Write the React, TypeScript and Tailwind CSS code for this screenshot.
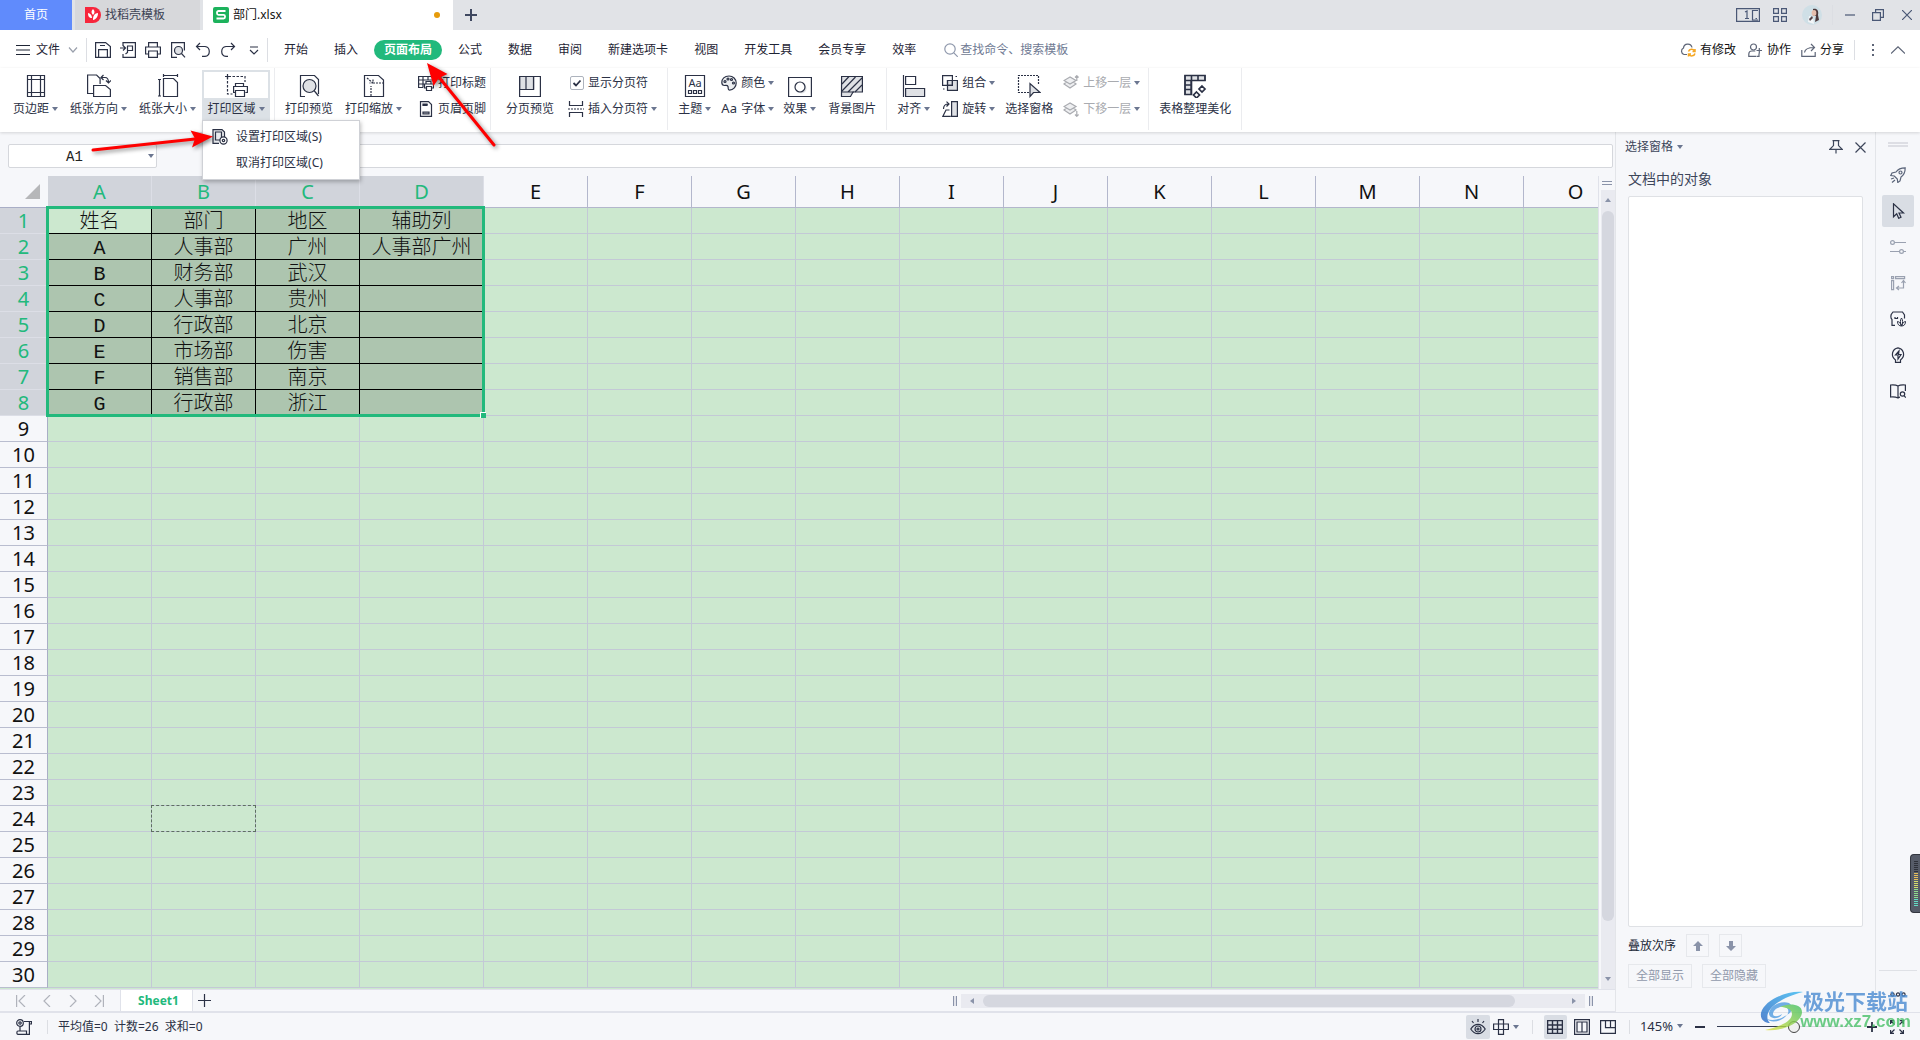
import React from 'react';

type Kids = { children?: React.ReactNode };

interface IconProps extends Kids {
  w?: number;
  h?: number;
  className?: string;
}

const Icon: React.FC<IconProps> = ({ w = 24, h, className = '', children }) => (
  <svg
    width={w}
    height={h ?? w}
    viewBox={`0 0 ${w} ${h ?? w}`}
    fill="none"
    stroke="currentColor"
    strokeWidth="1.2"
    className={`shrink-0 ${className}`}
    aria-hidden="true"
  >
    {children}
  </svg>
);

const Caret = ({ className = 'text-[#6b7690]' }: { className?: string }) => (
  <svg width="6" height="4" viewBox="0 0 6 4" fill="currentColor" className={`shrink-0 ${className}`} aria-hidden="true">
    <path d="M0 0h6L3 4z" />
  </svg>
);

const Sep = ({ className = 'h-5' }: { className?: string }) => <span className={`w-px shrink-0 bg-[#dcdee3] ${className}`} />;

/* ---------- title bar ---------- */

const TitleBar = () => (
  <header className="flex h-[30px] shrink-0 items-stretch bg-[#e1e3e7]">
    <button className="w-18 bg-[#608bfc] text-white">首页</button>
    <button className="ml-[3px] flex w-[125px] items-center gap-1 bg-[#d7d8db] pl-[10px] text-[#3c4254]">
      <svg width="16" height="16" viewBox="0 0 16 16" aria-hidden="true">
        <path d="M0 0h8a8 8 0 0 1 0 16H0z" fill="#f7263c" />
        <path d="M8 2c2 2 2 4 0 6-2-2-2-4 0-6zM3 6c2 .5 4 2 4 5-3 0-4-2-4-5zM13 6c-3 .5-5 2-5 7 3-.5 5-3 5-7z" fill="#fff" />
      </svg>
      找稻壳模板
    </button>
    <div className="ml-[3px] flex w-[250px] items-center gap-1 bg-white pl-[10px] text-[#111]">
      <svg width="16" height="16" viewBox="0 0 16 16" aria-hidden="true">
        <rect width="16" height="16" rx="2" fill="#1cb25c" />
        <path d="M12.5 4H5.5a1.5 1.5 0 0 0-1.5 1.5v.8c0 .9.6 1.5 1.5 1.5h5c.9 0 1.5.6 1.5 1.4v.8c0 .9-.6 1.5-1.5 1.5H3.5" fill="none" stroke="#fff" strokeWidth="1.8" />
      </svg>
      部门.xlsx
      <span className="mr-[13px] ml-auto size-1.5 rounded-full bg-[#e69b0b]" />
    </div>
    <button aria-label="新建标签" className="ml-[11px] text-[#3f4860]">
      <Icon w={14}>
        <path d="M7 1v12M1 7h12" strokeWidth="2" />
      </Icon>
    </button>
    <div className="ml-auto flex items-center text-[#4a5876]">
      <Icon w={24} h={14}>
        <path d="M.6.6h22.800v12.800H.6zM22 2.500h-5.500v9.500H22M19.500 10.500h1.500" />
        <path d="M9 4l2-1v7.500M9 10.500h4" />
      </Icon>
      <Icon w={14} className="ml-[13px]">
        <path d="M.6.6h4.8v4.800H.6zM8.600.6h4.800v4.800H8.600zM.6 8.600h4.800v4.800H.6zM8.600 8.600h4.800v4.800H8.600z" />
      </Icon>
      <svg width="20" height="20" viewBox="0 0 20 20" className="ml-[15px]" aria-hidden="true">
        <circle cx="10" cy="10" r="10" fill="#cfdfe6" />
        <path d="M11 4c4-1 6 2 5 6l1 5-4 2 1-6-3 0z" fill="#4b383b" />
        <ellipse cx="12" cy="8" rx="2.400" ry="3" fill="#e6bfae" />
        <path d="M7 11l4 1 1 7-6-2z" fill="#f3f6f8" />
        <path d="M7 14l3-3 1 2-3 3z" fill="#57454a" />
      </svg>
      <Sep className="ml-[10px] h-5 bg-[#c6c9d0]" />
      <button aria-label="最小化" className="ml-3">
        <Icon w={10}><path d="M0 5h10" /></Icon>
      </button>
      <button aria-label="还原" className="ml-[17px]">
        <Icon w={12}><path d="M.6 3.600h7.800v7.800H.6zM3.600 3.600v-3h7.800v7.800h-3" /></Icon>
      </button>
      <button aria-label="关闭" className="mr-2 ml-[18px]">
        <Icon w={10}><path d="M0 0l10 10M10 0L0 10" /></Icon>
      </button>
    </div>
  </header>
);

/* ---------- menu row ---------- */

const MENU_TABS = ['开始', '插入', '页面布局', '公式', '数据', '审阅', '新建选项卡', '视图', '开发工具', '会员专享', '效率'];

const QuickAccess = () => (
  <div className="flex items-center gap-[9px] text-[#2b3145]">
    <button aria-label="保存">
      <Icon w={16}><path d="M.6.6h10l4.800 4v10.800H.6zM3.600 15V7.600h8.800V15M5 3.500h5" /></Icon>
    </button>
    <button aria-label="输出为PDF">
      <Icon w={16}><path d="M3 4V.6h12.400v14.800H3V12M0 6h5M3 3.500L5.500 6 3 8.500M7 4h5.500v4.500H8M7.500 4v6.500l-2 1.500" /></Icon>
    </button>
    <button aria-label="打印">
      <Icon w={16}><path d="M3.600 5V.6h8.800V5M3.600 12H.6V5h14.800v7h-3M3.600 9h8.800v6.400H3.600z" /></Icon>
    </button>
    <button aria-label="打印预览">
      <Icon w={16}>
        <path d="M7 15.400H1.600V.6h12.800v8" />
        <circle cx="8.500" cy="8.500" r="4" fill="#dfe1e5" />
        <path d="M11.500 11.500l3.500 3.900" />
      </Icon>
    </button>
    <button aria-label="撤销">
      <Icon w={16}><path d="M5 1L1.500 4.500 5 8M1.500 4.500H10a5 5 0 0 1 0 9.900H7" /></Icon>
    </button>
    <button aria-label="恢复">
      <Icon w={16}><path d="M11 1l3.500 3.500L11 8M14.500 4.500H6a5 5 0 0 0 0 9.900h2" /></Icon>
    </button>
    <button aria-label="更多" className="ml-1">
      <Icon w={10}><path d="M1 2h8M1 5l4 4 4-4" /></Icon>
    </button>
  </div>
);

const MenuRow = () => (
  <nav className="flex h-[38px] shrink-0 items-center bg-white pt-0.5 text-[#1e2434]">
    <button className="ml-4 flex items-center gap-[6px]">
      <Icon w={14} h={10}><path d="M0 .5h14M0 5h14M0 9.500h14" /></Icon>
      文件
      <Icon w={10} h={6} className="ml-0.5 text-[#9aa0ac]"><path d="M1 .5l4 4.500L9 .5" /></Icon>
    </button>
    <Sep className="mx-2 h-6" />
    <QuickAccess />
    <Sep className="mr-[3px] ml-2 h-6" />
    <div className="flex items-center">
      {MENU_TABS.map((t) => (
        <button
          key={t}
          className={
            t === '页面布局'
              ? 'mx-[3px] h-5 rounded-full bg-[#22b97c] px-2.5 font-bold text-white'
              : 'mx-[3px] h-5 px-2.5'
          }
        >
          {t}
        </button>
      ))}
    </div>
    <label className="ml-[15px] flex items-center gap-0.5 text-[#8f98ac]">
      <Icon w={14}><circle cx="6" cy="6" r="5.200" /><path d="M9.800 9.800l4 4" /></Icon>
      <input className="w-32 placeholder:text-[#6f7a93]" placeholder="查找命令、搜索模板" aria-label="查找命令、搜索模板" />
    </label>
    <div className="ml-auto flex items-center text-[#5d6577]">
      <button className="flex items-center gap-1">
        <Icon w={16}>
          <path d="M7 12.500H4A3.500 3.500 0 0 1 3.500 6a4.300 4.300 0 0 1 8.500-.5" />
          <path d="M8.500 9.500a3.300 3.300 0 0 1 6-.5M15 7v2.500h-2.500M15 11.500a3.300 3.300 0 0 1-6 .8M8.500 14.500V12H11" stroke="#f5a623" strokeWidth="1.500" />
        </Icon>
        <span className="text-[#111]">有修改</span>
      </button>
      <button className="ml-3 flex items-center gap-1">
        <Icon w={15}>
          <circle cx="5.500" cy="4" r="3" />
          <path d="M8.500 13.400H.8v-2.400c0-2 1.500-3 3-3h3.500M9 13.400h2v-3M8.500 7.500H14M11.300 5v5.500" />
        </Icon>
        <span className="text-[#111]">协作</span>
      </button>
      <button className="ml-2.5 flex items-center gap-1">
        <Icon w={15}><path d="M.8 7v6.400h13.400V9M3.500 9.500C4 6 7 4.500 13 4.500M10 1l3.500 3.500L10 8" /></Icon>
        <span className="text-[#111]">分享</span>
      </button>
      <Sep className="ml-2.5 h-5" />
      <button aria-label="更多选项" className="ml-4">
        <Icon w={4} h={14}><path d="M1 2h2M1 7h2M1 12h2" strokeWidth="2" /></Icon>
      </button>
      <button aria-label="折叠功能区" className="mr-[15px] ml-4">
        <Icon w={14} h={8}><path d="M0 7.500L7 .8l7 6.700" /></Icon>
      </button>
    </div>
  </nav>
);

/* ---------- ribbon ---------- */

const Group = ({ className = 'pr-1 pl-1', children }: Kids & { className?: string }) => (
  <div className={`flex h-[62px] items-start border-r border-[#ebecef] pt-0.5 ${className}`}>{children}</div>
);

interface BigProps extends Kids {
  label: string;
  caret?: boolean;
}

const Big: React.FC<BigProps> = ({ label, caret, children }) => (
  <button className="flex flex-col items-center px-1.5 pt-1 whitespace-nowrap">
    {children}
    <span className="flex h-[22px] items-center gap-[3px]">
      {label}
      {caret && <Caret />}
    </span>
  </button>
);

const Small: React.FC<BigProps & { muted?: boolean }> = ({ label, caret, muted, children }) => (
  <button disabled={muted} className={`flex h-[26px] items-center gap-1 whitespace-nowrap ${muted ? 'text-[#a9abb0]' : ''}`}>
    {children}
    <span className="flex items-center gap-[3px]">
      {label}
      {caret && <Caret />}
    </span>
  </button>
);

const LayersPath = () => (
  <>
    <path d="M7 2L1 5.500 7 9l6-3.500zM3.500 7L1 9l6 4 6-4-2.500-2" fill="#eeeff1" />
  </>
);

const Ribbon = () => (
  <div className="relative z-10 flex h-16 shrink-0 items-start bg-white text-[#2b3145] shadow-[0_1px_3px_rgba(0,0,0,0.14)]">
    <Group className="pr-1 pl-[7px]">
      <Big label="页边距" caret>
        <Icon>
          <path d="M3.500 1.500h17v21h-17zM7.500 1.500v21M16.500 1.500v21M3.500 5.500h17M3.500 18.500h17" />
        </Icon>
      </Big>
      <Big label="纸张方向" caret>
        <Icon>
          <path d="M6.500 19.500H.6V1h9l3.500 3.500V10" />
          <path d="M6.600 22.500V11.500h12l4.800 4v7z" />
          <path d="M14 3.500h4c2.500 0 3.500 1.500 3.500 5M16.500 1L14 3.500 16.500 6M19 6.500L21.500 9 24 6.500" />
        </Icon>
      </Big>
      <Big label="纸张大小" caret>
        <Icon>
          <path d="M7.500 4.500h10l4 4v14h-14zM7 1.500h15M7.500 0v3M21.500 0v3M3.500 5v17M2 5.500h3M2 22h3" />
        </Icon>
      </Big>
      <div className="relative">
        <button className="flex flex-col items-center bg-[#dce1e6] px-0.5 whitespace-nowrap" aria-expanded="true">
          <span className="mt-0.5 flex w-16 justify-center bg-white pt-0.5">
            <Icon>
              <path d="M4.500 2.500H21V8M3.500 3v17h5" strokeDasharray="2.500 1.500" />
              <path d="M1 2.500h5M3.500 0v5" />
              <path d="M11.500 12.500v-3h8v3M11.500 18.500H9.600v-6h13.800v6h-2M11.500 16.500h9v6h-9z" fill="#fff" />
            </Icon>
          </span>
          <span className="flex h-[22px] items-center gap-[3px]">
            打印区域
            <Caret />
          </span>
        </button>
        <PrintAreaMenu />
      </div>
    </Group>
    <Group>
      <Big label="打印预览">
        <Icon>
          <path d="M8 22.500H3.500v-21h14l4 4V20" />
          <circle cx="12.500" cy="12" r="6.500" fill="#dfe1e5" />
          <path d="M17 16.500l4.500 5.500" />
        </Icon>
      </Big>
      <Big label="打印缩放" caret>
        <Icon>
          <path d="M2.500 1.500h14l5 4.500v16.500h-19z" />
          <path d="M5 4l6 5M11 5.500V9H7.500M9 22V12M11 9h10" strokeDasharray="2 1" />
        </Icon>
      </Big>
      <div className="flex flex-col pl-2.5">
        <Small label="打印标题">
          <Icon w={16}>
            <path d="M5 12.500H.6V1.500h14.800V6M.6 5h14M5 1.500v11M.6 9H6M10 1.500v4" />
            <path d="M8 9V6.500h5V9M8 13H6.500V9h9v4H14M8.500 11.500h5v4h-5z" />
          </Icon>
        </Small>
        <Small label="页眉页脚">
          <Icon w={16}><path d="M2.500.6h8l3 3v11.800h-11zM5 3.500h4.500M5 12h6" /><path d="M5 11h6v2H5zM5 3h4v1.500H5z" /></Icon>
        </Small>
      </div>
    </Group>
    <Group className="pr-2.5 pl-[9px]">
      <Big label="分页预览">
        <Icon>
          <path d="M1.600 2.500h14v13h-14z" fill="#dfe1e5" />
          <path d="M1.600 2.500h20.800v20H1.600zM8 2.500v13M15.500 2.500v13" />
        </Icon>
      </Big>
      <div className="flex flex-col pl-2">
        <label className="flex h-[26px] items-center gap-1 pl-0.5 whitespace-nowrap">
          <span className="relative flex size-[14px]">
            <input type="checkbox" defaultChecked className="size-[14px] appearance-none rounded-[2px] border border-[#adb3bd] bg-white" />
            <Icon w={14} className="pointer-events-none absolute inset-0"><path d="M3.500 7l2.500 2.500 4.500-5" strokeWidth="1.800" /></Icon>
          </span>
          显示分页符
        </label>
        <Small label="插入分页符" caret>
          <Icon w={16}>
            <path d="M1.500 0v4.500h13V0M1.500 16v-4.500h13V16" />
            <path d="M0 8h16" strokeDasharray="2 1" />
          </Icon>
        </Small>
      </div>
    </Group>
    <Group>
      <Big label="主题" caret>
        <Icon>
          <path d="M2.500 1.500h19v21h-19z" />
          <text x="12" y="13" fontSize="11" textAnchor="middle" stroke="none" fill="currentColor" fontFamily="Noto Sans">Aa</text>
          <path d="M5.500 16.500h3v3h-3zM10.500 16.500h3v3h-3zM15.500 16.500h3v3h-3z" />
        </Icon>
      </Big>
      <div className="flex flex-col pl-1">
        <Small label="颜色" caret>
          <Icon w={16}>
            <path d="M8 1C3.500 1 .8 4 .8 7.500c0 2 1.200 3 2.700 3 2 0 3-.5 3.500 1 .5 2-.5 3.700 1.500 3.700 4 0 6.700-3.700 6.700-7.200C15.200 4 12 1 8 1z" fill="#eceef0" />
            <circle cx="4" cy="6.500" r="1" /><circle cx="7" cy="4" r="1" /><circle cx="10.500" cy="4.500" r="1" /><circle cx="12.500" cy="8" r="1" />
          </Icon>
        </Small>
        <Small label="字体" caret>
          <span className="w-4 text-[13px]">Aa</span>
        </Small>
      </div>
      <div className="pl-[3px]">
        <Big label="效果" caret>
          <Icon>
            <path d="M.6 3.500h22.800v19H.6z" />
            <circle cx="13.500" cy="14.500" r="5" fill="#dfe1e5" stroke="none" />
            <circle cx="12" cy="13" r="5" fill="#fff" />
          </Icon>
        </Big>
      </div>
      <Big label="背景图片">
        <Icon>
          <path d="M1.600 2.500h20.800v15.500H13l-2.500 4.500h-9z" fill="#dfe1e5" />
          <path d="M2 10l7-7.500M2 17L15.500 3M8 18L22 4M15 18l7-7M2 18h12" />
        </Icon>
      </Big>
    </Group>
    <Group className="pr-2 pl-1">
      <Big label="对齐" caret>
        <Icon>
          <path d="M1.500 1v22M3.600 2.500h10v8h-10z" />
          <path d="M3.600 14.500h19v8h-19z" fill="#dfe1e5" />
        </Icon>
      </Big>
      <div className="flex flex-col pr-1 pl-1.5">
        <Small label="组合" caret>
          <Icon w={16}>
            <path d="M5.500 5.500h9.900v9.900H5.500z" fill="#dfe1e5" />
            <path d="M.6.6h9.800v9.800H.6z" />
            <path d="M5.500 5.500h4.900v4.900H5.500zM13.500 1.500h1.500M1 14h1.500" />
          </Icon>
        </Small>
        <Small label="旋转" caret>
          <Icon w={16}>
            <path d="M9.600.6h5.800v14.800H9.600z" fill="#dfe1e5" />
            <path d="M7.500 9H4L.8 15.400h8M1.500 8c0-3 1.500-5 5-5M4.500.6L7 3 4.500 5.500" />
          </Icon>
        </Small>
      </div>
      <Big label="选择窗格">
        <Icon>
          <path d="M12 18.500H1.500v-17h20V11" strokeDasharray="2 1" />
          <path d="M13 9.500v13l3.500-4h6.500z" fill="#dfe1e5" />
        </Icon>
      </Big>
      <div className="flex flex-col pl-1">
        <Small label="上移一层" caret muted>
          <Icon w={16}><LayersPath /><path d="M13.800 6V1M12 2.500L13.800.7l1.800 1.800" /></Icon>
        </Small>
        <Small label="下移一层" caret muted>
          <Icon w={16}><LayersPath /><path d="M13.800 10v5M12 13.500l1.800 1.800 1.800-1.800" /></Icon>
        </Small>
      </div>
    </Group>
    <Group>
      <Big label="表格整理美化">
        <Icon>
          <path d="M2 1.500h20v5H8v14H2z" fill="#dfe1e5" />
          <path d="M2 1.500h20v5H2zM2 6.500v14h6.500v-19M2 11h6M2 15.500h6M15 1.500v5" strokeWidth="1.600" />
          <path d="M19 12l3 3-3 3-3-3zM13.500 18l3 3-3 3-3-3z" strokeWidth="1.700" />
        </Icon>
      </Big>
    </Group>
  </div>
);

const PrintAreaMenu = () => (
  <ul className="absolute top-[50px] left-0 z-20 w-[158px] border border-[#cfd1d6] bg-white py-[3px] text-[#2b3145] shadow-[1px_2px_4px_rgba(0,0,0,0.25)]">
    <li>
      <button className="flex h-[26px] w-full items-center gap-2 pl-[9px]">
        <Icon w={16}>
          <path d="M7 14.400H1V.6h9l2.500 2.500V8M3.500 3h6v8h-6z" fill="#e9ebee" />
          <circle cx="11.500" cy="11.500" r="3.600" fill="#fff" />
          <circle cx="11.500" cy="11.500" r="1.200" />
        </Icon>
        设置打印区域(S)
      </button>
    </li>
    <li>
      <button className="flex h-[26px] w-full items-center pl-[33px]">取消打印区域(C)</button>
    </li>
  </ul>
);

/* ---------- worksheet ---------- */

const COLS = 'ABCDEFGHIJKLMNO'.split('');
const ROWS = Array.from({ length: 30 }, (_, i) => i + 1);
const DATA = [
  ['姓名', '部门', '地区', '辅助列'],
  ['A', '人事部', '广州', '人事部广州'],
  ['B', '财务部', '武汉', ''],
  ['C', '人事部', '贵州', ''],
  ['D', '行政部', '北京', ''],
  ['E', '市场部', '伤害', ''],
  ['F', '销售部', '南京', ''],
  ['G', '行政部', '浙江', ''],
];

const cellClass = (r: number, c: number) => {
  if (r === 0 && c === 0) return 'border-black bg-[#cce8cf]';
  if (r < 8 && c < 4) return 'border-black bg-[#adc5af]';
  return 'border-[#c3c9d6]';
};

const Sheet = () => (
  <div className="relative min-h-0 flex-1 overflow-hidden bg-[#cce8cf]">
    <table className="w-max table-fixed border-separate border-spacing-0 text-center">
      <colgroup>
        <col className="w-12" />
        {COLS.map((c) => (
          <col key={c} className={c === 'D' ? 'w-[124px]' : 'w-[104px]'} />
        ))}
      </colgroup>
      <thead>
        <tr className="h-8">
          <th className="h-8 border-b border-[#a9aec6] bg-[#f6f7fa] p-0 align-bottom">
            <svg width="15" height="15" viewBox="0 0 15 15" className="mb-2 ml-[25px]" aria-hidden="true">
              <path d="M15 0v15H0z" fill="#b6b7b9" />
            </svg>
          </th>
          {COLS.map((c, i) => (
            <th
              key={c}
              scope="col"
              className={`h-8 border-r border-b p-0 text-xl font-normal leading-[30px] ${
                i < 4 ? 'border-r-[#dcdee6] border-b-[#a9aec6] bg-[#d1d4db] text-[#22b97c]' : 'border-[#b3b7cc] bg-[#f6f7fa] text-[#111]'
              }`}
            >
              {c}
            </th>
          ))}
        </tr>
      </thead>
      <tbody>
        {ROWS.map((n, r) => (
          <tr key={n}>
            <th
              scope="row"
              className={`h-[26px] border-r border-b border-r-[#a9aec6] p-0 text-xl font-normal leading-[25px] ${
                r < 8 ? 'border-b-[#dcdee6] bg-[#d1d4db] text-[#22b97c]' : 'border-b-[#b9bdcf] bg-[#f6f7fa] text-[#111]'
              }`}
            >
              {n}
            </th>
            {COLS.map((c, i) => (
              <td
                key={c}
                className={`h-[26px] border-r border-b p-0 pt-1 font-['Liberation_Mono','Noto_Sans_CJK_SC',monospace] text-xl leading-[21px] font-light whitespace-nowrap text-[#111] ${cellClass(r, i)}`}
              >
                {DATA[r]?.[i]}
              </td>
            ))}
          </tr>
        ))}
      </tbody>
    </table>
    {/* selected range A1:D8 with its fill handle */}
    <div className="pointer-events-none absolute top-[30px] left-[46px] h-[211px] w-[439px] border-3 border-[#22b97c]">
      <span className="absolute -right-1 -bottom-1 size-[6px] border-t border-l border-white bg-[#22b97c]" />
    </div>
    {/* copied cell B24 */}
    <div className="pointer-events-none absolute top-[629px] left-[151px] h-[27px] w-[105px] border border-dashed border-[#5d6f62]" />
  </div>
);

const FormulaBar = () => (
  <div className="flex h-11 shrink-0 items-center gap-12 bg-[#f6f7fa] pt-2 pr-0.5 pb-1 pl-2">
    <div className="flex h-6 w-[149px] items-center rounded-[2px] border border-[#d5d7dc] bg-white pr-0.5">
      <input defaultValue="A1" aria-label="名称框" className="h-5 w-full min-w-0 pt-0.5 pr-2 text-center font-['Liberation_Mono',monospace] text-sm text-[#222]" />
      <Caret />
    </div>
    <input aria-label="编辑栏" className="h-6 min-w-0 flex-1 rounded-[2px] border border-[#d5d7dc] bg-white" />
  </div>
);

const VScroll = () => (
  <div className="flex w-[17px] shrink-0 flex-col items-center border-l border-[#e0e2ea] bg-[#f6f7fa]">
    <div className="flex h-[14px] w-full items-center justify-center text-[#8a93a9]">
      <Icon w={10} h={4}><path d="M0 .5h10M0 3.500h10" /></Icon>
    </div>
    <div className="ml-[2px] flex w-[14px] flex-1 flex-col items-center bg-[#e9eaf0]">
      <Caret className="mt-2 rotate-180 text-[#8a93a9]" />
      <div className="mt-[9px] w-3 flex-1 rounded-full bg-[#d5d7df]" />
      <Caret className="mt-14 mb-2 text-[#8a93a9]" />
    </div>
  </div>
);

const SheetTabs = () => (
  <div className="flex h-[23px] shrink-0 items-center border-y border-[#e0e2ea] bg-[#f6f7fa] text-[#b0b3bb]">
    <div className="ml-4 flex items-center gap-4">
      <button aria-label="第一张"><Icon w={10} h={12}><path d="M.6 0v12M9 0L3 6l6 6" /></Icon></button>
      <button aria-label="上一张"><Icon w={10} h={12}><path d="M8 0L2 6l6 6" /></Icon></button>
      <button aria-label="下一张"><Icon w={10} h={12}><path d="M2 0l6 6-6 6" /></Icon></button>
      <button aria-label="最后一张"><Icon w={10} h={12}><path d="M9.400 0v12M1 0l6 6-6 6" /></Icon></button>
    </div>
    <button className="ml-4 h-full w-[73px] border-x border-[#e0e2ea] bg-white pl-1 font-bold text-[#22b97c]">Sheet1</button>
    <button aria-label="新建工作表" className="ml-[5px] text-[#2b3145]">
      <Icon w={13}><path d="M6.500 0v13M0 6.500h13" /></Icon>
    </button>
    <div className="ml-auto flex w-[41%] items-center text-[#8a93a9]">
      <Icon w={4} h={12}><path d="M.6 1v10M3.400 1v10" /></Icon>
      <div className="mx-1 flex h-[14px] flex-1 items-center bg-[#e9eaf0] px-2">
        <Caret className="rotate-90" />
        <div className="mr-14 ml-2 h-3 flex-1 rounded-full bg-[#d5d7df]" />
        <Caret className="-rotate-90" />
      </div>
      <Icon w={4} h={12} className="mr-[22px]"><path d="M.6 1v10M3.400 1v10" /></Icon>
    </div>
  </div>
);

/* ---------- right side ---------- */

const ObjectPane = () => (
  <aside className="flex w-[261px] shrink-0 flex-col border-x border-[#e3e5e9] bg-[#f6f7fa] pb-6 text-[#3d465a]">
    <div className="flex h-[30px] items-center pl-[9px]">
      <button className="flex items-center gap-1">
        选择窗格
        <Caret />
      </button>
      <button aria-label="固定" className="ml-auto">
        <Icon w={14}><path d="M3.500.6h7M4.500.6v5L.8 9.400h12.400L9.500 5.600v-5M7 9.500V13.500" /></Icon>
      </button>
      <button aria-label="关闭窗格" className="mr-[9px] ml-3">
        <Icon w={11}><path d="M.5.5l10 10M10.500.5l-10 10" /></Icon>
      </button>
    </div>
    <h2 className="flex h-[34px] items-center pl-3 text-sm">文档中的对象</h2>
    <div className="mr-3 ml-3 flex-1 rounded-[2px] border border-[#dfe1e5] bg-white" />
    <div className="mt-[7px] flex items-center gap-2.5 pl-3">
      <span className="text-[#222838]">叠放次序</span>
      <button aria-label="上移" className="flex size-[23px] items-center justify-center border border-[#e6e8ec] text-[#8a93a9]">
        <Icon w={10}><path d="M5 0l5 5H7v5H3V5H0z" fill="currentColor" stroke="none" /></Icon>
      </button>
      <button aria-label="下移" className="flex size-[23px] items-center justify-center border border-[#e6e8ec] text-[#8a93a9]">
        <Icon w={10}><path d="M5 10l5-5H7V0H3v5H0z" fill="currentColor" stroke="none" /></Icon>
      </button>
    </div>
    <div className="mt-[7px] flex gap-2.5 pl-3 text-[#9199ab]">
      <button className="h-6 w-16 border border-[#e6e8ec]">全部显示</button>
      <button className="h-6 w-16 border border-[#e6e8ec]">全部隐藏</button>
    </div>
  </aside>
);

const SideStrip = () => (
  <aside className="flex w-11 shrink-0 flex-col items-center gap-1 bg-[#f6f7fa] pt-[10px] text-[#2b3145]">
    <Icon w={20} h={5} className="mb-2 text-[#c3c6cd]"><path d="M0 1h20M0 4h20" /></Icon>
    <button aria-label="助手" className="flex size-8 items-center justify-center text-[#5a6479]">
      <Icon w={16}>
        <path d="M15.200.8C11 .8 8 2 6 5L2 6 .8 8.500l3.500.5 3 3 .5 3.500L10 14l1-4c3-2 4.200-5 4.200-9.200zM4 11l-3 1M5 13l-3 2.500" />
        <circle cx="10.500" cy="5.500" r="1.500" />
      </Icon>
    </button>
    <button aria-label="选择" className="flex size-8 items-center justify-center rounded-[2px] bg-[#d9dde4]">
      <Icon w={16}><path d="M3.500.8v13l3.200-3 2 4.500 2.300-1-2-4.300h4.500z" /></Icon>
    </button>
    <button aria-label="属性" className="flex size-8 items-center justify-center text-[#9aa1b0]">
      <Icon w={16}><circle cx="2.500" cy="3.500" r="1.900" /><circle cx="11.500" cy="12.500" r="1.900" /><path d="M4.500 3.500H16M0 12.500h9.500M13.500 12.500H16" /></Icon>
    </button>
    <button aria-label="转换" className="flex size-8 items-center justify-center text-[#9aa1b0]">
      <Icon w={16}><path d="M1.600 1.600h2v2h-2zM5.600 1.600h9v2h-9zM1.600 5.600h2v9h-2zM13.500 6v7H7M11.500 8l2-2.500 2 2.500M9 11l-2.500 2L9 15" /></Icon>
    </button>
    <button aria-label="模板" className="flex size-8 items-center justify-center">
      <Icon w={16}>
        <path d="M5 14.400H2V8.500C.5 7.500.6 6 1.200 3.500L3 1h9.500l2 3v3.500M5 6v1.500h2.500V6" />
        <path d="M11.500 7c1.500 2 1.500 5 0 8-1.500-3-1.500-6 0-8zM7.500 10.500c1.500 0 3 1.500 4 4.500-2.500 0-4-1.500-4-4.500zM15.500 10.500c-1.500 0-3 1.500-4 4.500 2.500 0 4-1.500 4-4.500z" strokeWidth="1" />
      </Icon>
    </button>
    <button aria-label="智能" className="flex size-8 items-center justify-center">
      <Icon w={16}><path d="M5.500 15.400v-2.500A6.600 6.600 0 0 1 8 .8a6.600 6.600 0 0 1 2.500 12.100v2.500zM9 4L5.500 8H8v4l3-4.500H8.500z" /></Icon>
    </button>
    <button aria-label="查阅" className="flex size-8 items-center justify-center">
      <Icon w={16}><path d="M8 3v12M8 3C6 1.800 3 1.800.6 2v12c3-.4 5.400 0 7.400 1 .7-.5 1.500-.8 2-.9M8 3c2-1.200 5-1.200 7.400-1v6" /><circle cx="12.500" cy="11" r="2.200" /><path d="M14 12.600l1.800 2" /></Icon>
    </button>
    <span className="mt-auto h-px w-[38px] bg-[#dfe1e6]" />
    <button aria-label="更多工具" className="mt-[17px] mb-[15px]">
      <Icon w={16} h={5}><circle cx="2.500" cy="2.500" r="1.600" /><circle cx="8" cy="2.500" r="1.600" /><circle cx="13.500" cy="2.500" r="1.600" /></Icon>
    </button>
  </aside>
);

/* ---------- status bar ---------- */

const StatusBar = () => (
  <footer className="flex h-[27px] shrink-0 items-center bg-[#f6f7fa] text-[#2b3145]">
    <Icon w={16} className="ml-4">
      <circle cx="4" cy="4" r="3.300" /><circle cx="4" cy="4" r="1.200" />
      <path d="M4 8v4M8 2.500h7.400V5h-2v10.400H2c-1.500 0-1.500-3.400 0-3.400h8.500v3M13.400 5V2.500" />
    </Icon>
    <Sep className="mr-[10px] ml-[15px] h-[14px]" />
    <span>平均值=0&nbsp; 计数=26&nbsp; 求和=0</span>
    <div className="ml-auto flex items-center">
      <button aria-label="护眼模式" className="flex h-6 w-6 items-center justify-center rounded-[2px] bg-[#d9dde4]">
        <Icon w={16}>
          <path d="M.8 10C3 6.500 5 5.300 8 5.300S13 6.500 15.200 10C13 13.500 11 14.700 8 14.700S3 13.500.8 10zM8 0v3M2 2l1.500 2M14 2l-1.500 2" />
          <circle cx="8" cy="10" r="3" /><circle cx="8" cy="10" r="1" />
        </Icon>
      </button>
      <button aria-label="阅读模式" className="ml-[3px] flex items-center gap-1">
        <Icon w={16}><path d="M5.500.6h5v14.800h-5zM.6 5h14.800v5.500H.6z" /></Icon>
        <Caret />
      </button>
      <Sep className="mr-[11px] ml-[13px] h-[14px]" />
      <button aria-label="普通视图" className="flex h-6 w-[23px] items-center justify-center rounded-[2px] bg-[#d9dde4]">
        <Icon w={16}><path d="M.6 1.600h14.800v12.800H.6zM5.500 1.600v12.800M10.500 1.600v12.800M.6 6h14.800M.6 10.200h14.800" strokeWidth="1.400" /></Icon>
      </button>
      <button aria-label="页面布局视图" className="ml-[7px]">
        <Icon w={16}><path d="M.6.6h14.800v14.800H.6zM3 3h10v10H3zM8 3v10" /></Icon>
      </button>
      <button aria-label="分页视图" className="ml-[10px]">
        <Icon w={16}><path d="M.6 1.600h14.800v12.800H.6zM5.500 1.600v7h9.900M10.500 1.600v7" /></Icon>
      </button>
      <Sep className="mr-[10px] ml-[13px] h-[14px]" />
      <button className="flex items-center gap-1 text-[13px]">
        145%
        <Caret />
      </button>
      <button aria-label="缩小" className="ml-3">
        <Icon w={10}><path d="M0 5h10" strokeWidth="2" /></Icon>
      </button>
      <input
        type="range"
        min={10}
        max={248}
        defaultValue={145}
        aria-label="缩放比例"
        className="ml-3 h-3 w-[138px] appearance-none bg-[linear-gradient(90deg,#333b52_50%,#d5d8df_50%)] bg-[length:100%_1px] bg-center bg-no-repeat [&::-webkit-slider-thumb]:size-3 [&::-webkit-slider-thumb]:appearance-none [&::-webkit-slider-thumb]:rounded-full [&::-webkit-slider-thumb]:border [&::-webkit-slider-thumb]:border-[#444] [&::-webkit-slider-thumb]:bg-[#f0f0f0]"
      />
      <button aria-label="放大" className="ml-3">
        <Icon w={10}><path d="M0 5h10M5 0v10" strokeWidth="1.800" /></Icon>
      </button>
      <button aria-label="全屏" className="mr-4 ml-[13px]">
        <Icon w={14}><path d="M.6 4V.6H4M10 .6h3.400V4M13.400 10v3.400H10M4 13.400H.6V10M1 1l3.500 3.500M13 1L9.500 4.500M13 13l-3.500-3.500M1 13l3.500-3.500" /></Icon>
      </button>
    </div>
  </footer>
);

/* ---------- things floating above the window ---------- */

const Arrows = () => (
  <svg width="540" height="200" viewBox="0 0 540 200" className="pointer-events-none absolute top-0 left-0 z-30 drop-shadow-[2px_2px_2px_rgba(0,0,0,0.45)]" aria-hidden="true">
    <path d="M93 150L195 139" stroke="#fe0000" strokeWidth="3" strokeLinecap="round" />
    <path d="M213 136.500L190.500 130.500L195 138.500L192 147.500z" fill="#fe0000" />
    <path d="M494 145L438 76" stroke="#fe0000" strokeWidth="3" strokeLinecap="round" />
    <path d="M427 63L447.500 74L439 78L433.500 86z" fill="#fe0000" />
  </svg>
);

const Meter = () => (
  <div className="absolute right-0 bottom-[127px] z-30 flex h-[59px] w-[10px] items-center justify-center rounded-l-sm border border-r-0 border-[#33363f] bg-[#565b68]">
    <svg width="4" height="46" viewBox="0 0 4 46" aria-hidden="true">
      {Array.from({ length: 23 }, (_, i) => (
        <path
          key={i}
          d={`M0 ${i * 2 + 0.5}h4`}
          stroke={i < 6 ? '#2e3039' : i < 10 ? '#e6bf5a' : i < 14 ? '#d5dc6c' : i < 19 ? '#8fdc8c' : '#63dcc4'}
        />
      ))}
    </svg>
  </div>
);

const Watermark = () => (
  <div className="pointer-events-none absolute right-[9px] bottom-2 z-30 flex items-center opacity-80">
    <svg width="44" height="42" viewBox="0 0 44 42" className="-mr-1" aria-hidden="true">
      <defs>
        <linearGradient id="swirlBlue" x1="1" y1="0" x2="0" y2="1">
          <stop offset="0" stopColor="#36b9f2" />
          <stop offset="1" stopColor="#2a67c4" />
        </linearGradient>
        <linearGradient id="swirlGreen" x1="1" y1="0" x2="0" y2="1">
          <stop offset="0" stopColor="#3dbf62" />
          <stop offset="1" stopColor="#e3e23c" />
        </linearGradient>
      </defs>
      <path d="M43 2C28 0 4 10 1 23c-1 6 3 10 9 10C2 25 12 10 43 2z" fill="url(#swirlBlue)" />
      <path d="M7 29c3 4 13 3 18-2 5-4 4-9 0-10-7-1-12 3-12 7 0 3 5 3 9 0-2 5-12 6-13 0 0-8 12-14 20-11 6 4 3 10-4 13-6 4-13 5-18 3z" fill="#4f9be0" />
      <path d="M20 17c7-4 22-4 22 5 0 11-20 20-37 18 15-3 27-9 27-16 0-5-6-7-12-7z" fill="url(#swirlGreen)" />
    </svg>
    <div className="flex flex-col items-center">
      <span className="text-[21px] leading-[22px] font-bold text-[#4a8bd2]">极光下载站</span>
      <span className="font-['Liberation_Sans',sans-serif] text-[17px] leading-5 font-bold text-[#49c168]">www.xz7.com</span>
    </div>
  </div>
);

const App: React.FC = () => (
  <div className="relative flex h-screen flex-col overflow-hidden bg-[#f6f7fa] font-['Noto_Sans','Noto_Sans_CJK_SC',sans-serif] text-xs">
    <TitleBar />
    <MenuRow />
    <Ribbon />
    <div className="flex min-h-0 flex-1 border-b border-[#e0e2ea]">
      <main className="flex min-w-0 flex-1 flex-col">
        <FormulaBar />
        <div className="flex min-h-0 flex-1">
          <Sheet />
          <VScroll />
        </div>
        <SheetTabs />
      </main>
      <ObjectPane />
      <SideStrip />
    </div>
    <StatusBar />
    <Arrows />
    <Meter />
    <Watermark />
  </div>
);

export default App;
